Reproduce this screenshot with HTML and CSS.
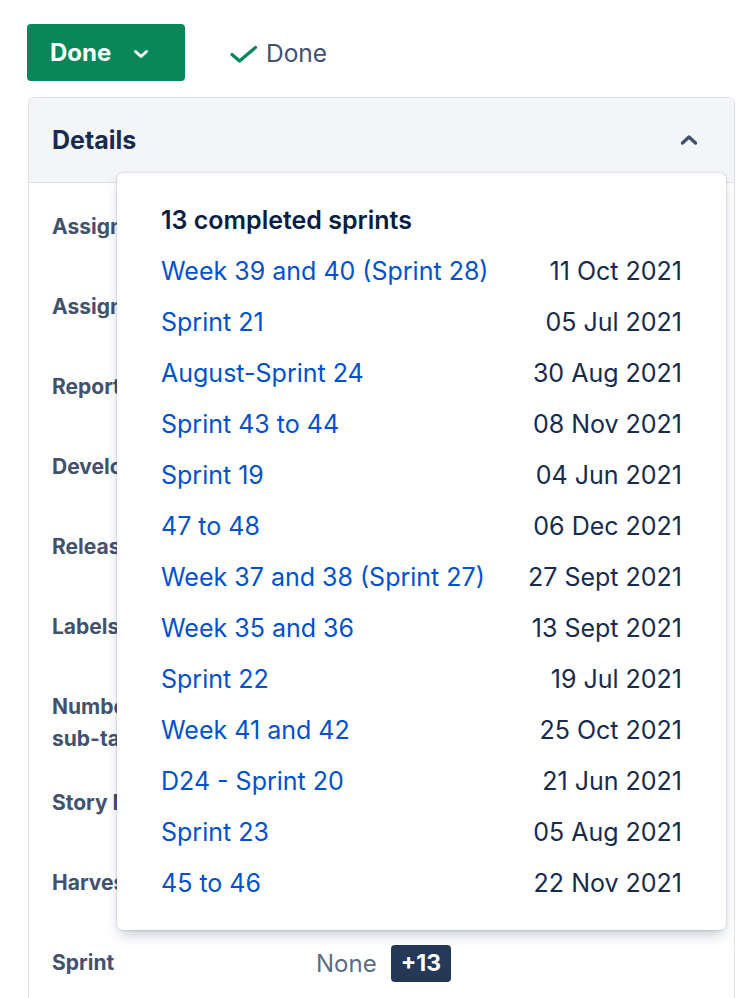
FILE: index.html
```html
<!DOCTYPE html>
<html lang="en">
<head>
<meta charset="utf-8">
<title>Issue details</title>
<link rel="stylesheet" href="styles.css">
</head>
<body>
<div class="toolbar">
  <button class="status-btn">
    <span>Done</span>
    <svg class="btn-chev" width="16" height="12" viewBox="0 0 16 12"><path d="M2.5 3.5 L8 8.5 L13.5 3.5" fill="none" stroke="#fff" stroke-width="3" stroke-linecap="round" stroke-linejoin="round"/></svg>
  </button>
  <div class="resolution">
    <svg class="check" width="28" height="20" viewBox="0 0 28 20"><path d="M2 10.5 L9.5 17 L25.5 3.5" fill="none" stroke="#00875a" stroke-width="3.2" stroke-linecap="round" stroke-linejoin="round"/></svg>
    <span>Done</span>
  </div>
</div>

<section class="panel">
  <header class="panel-head">
    <h2>Details</h2>
    <svg class="up-chev" width="18" height="12" viewBox="0 0 18 12"><path d="M2.5 9 L9 3 L15.5 9" fill="none" stroke="#42526e" stroke-width="3.4" stroke-linecap="round" stroke-linejoin="round"/></svg>
  </header>
  <div class="panel-body">
    <div class="row"><div class="label">Assignee</div><div class="value"></div></div>
    <div class="row"><div class="label">Assigned</div><div class="value"></div></div>
    <div class="row"><div class="label">Reporter</div><div class="value"></div></div>
    <div class="row"><div class="label">Develop</div><div class="value"></div></div>
    <div class="row"><div class="label">Releases</div><div class="value"></div></div>
    <div class="row"><div class="label">Labels</div><div class="value"></div></div>
    <div class="row"><div class="label">Number of<br>sub-tasks</div><div class="value"></div></div>
    <div class="row"><div class="label">Story Points</div><div class="value"></div></div>
    <div class="row"><div class="label">Harvest</div><div class="value"></div></div>
    <div class="row last"><div class="label">Sprint</div><div class="value"><span class="none">None</span><span class="badge">+13</span></div></div>
  </div>
</section>

<div class="popup">
  <div class="popup-title">13 completed sprints</div>
  <ul class="sprints">
    <li><a>Week 39 and 40 (Sprint 28)</a><span>11 Oct 2021</span></li>
    <li><a>Sprint 21</a><span>05 Jul 2021</span></li>
    <li><a>August-Sprint 24</a><span>30 Aug 2021</span></li>
    <li><a>Sprint 43 to 44</a><span>08 Nov 2021</span></li>
    <li><a>Sprint 19</a><span>04 Jun 2021</span></li>
    <li><a>47 to 48</a><span>06 Dec 2021</span></li>
    <li><a>Week 37 and 38 (Sprint 27)</a><span>27 Sept 2021</span></li>
    <li><a>Week 35 and 36</a><span>13 Sept 2021</span></li>
    <li><a>Sprint 22</a><span>19 Jul 2021</span></li>
    <li><a>Week 41 and 42</a><span>25 Oct 2021</span></li>
    <li><a>D24 - Sprint 20</a><span>21 Jun 2021</span></li>
    <li><a>Sprint 23</a><span>05 Aug 2021</span></li>
    <li><a>45 to 46</a><span>22 Nov 2021</span></li>
  </ul>
</div>
</body>
</html>
```

FILE: styles.css
```css
* { box-sizing: border-box; }
html, body { margin: 0; padding: 0; }
body {
  background: #ffffff;
  font-family: Inter, "Noto Sans", "Liberation Sans", sans-serif;
  color: #172b4d;
  height: 998px;
  overflow: hidden;
}

.toolbar {
  display: flex;
  align-items: center;
  padding: 24px 0 0 27px;
  gap: 45px;
}
.status-btn {
  display: flex;
  align-items: center;
  gap: 22px;
  height: 57px;
  width: 158px;
  padding: 0 0 0 23px;
  border: none;
  border-radius: 4px;
  background: #07875a;
  color: #ffffff;
  font-family: inherit;
  font-size: 24px;
  font-weight: 700;
}
.btn-chev { margin-top: 2px; }
.resolution {
  display: flex;
  align-items: center;
  gap: 8px;
  font-size: 24.5px;
  color: #42526e;
}
.check { margin-top: 2px; }

.panel {
  margin: 16px 0 0 28px;
  width: 707px;
  border: 1px solid #dfe1e6;
  border-bottom: none;
  border-radius: 6px 6px 0 0;
  height: 901px;
}
.panel-head {
  height: 85px;
  display: flex;
  align-items: center;
  justify-content: space-between;
  padding: 0 36px 0 23px;
  background: #f4f5f7;
  border-bottom: 1px solid #dfe1e6;
  border-radius: 6px 6px 0 0;
}
.panel-head h2 {
  margin: 0;
  font-size: 25px;
  font-weight: 700;
  color: #172b4d;
}

.row {
  display: grid;
  grid-template-columns: 264px 1fr;
  padding: 28px 0 4px 23px;
  min-height: 80px;
}
.row.last {
  min-height: 0;
  padding-bottom: 0;
}
.label {
  font-size: 21px;
  line-height: 32px;
  font-weight: 700;
  color: #42526e;
  white-space: nowrap;
}
.value {
  display: flex;
  align-items: center;
  height: 32px;
  gap: 14px;
}
.none {
  font-size: 24px;
  color: #5e6c84;
}
.badge {
  display: inline-flex;
  align-items: center;
  height: 37px;
  padding: 0 10px;
  border-radius: 4px;
  background: #253858;
  color: #ffffff;
  font-size: 23px;
  font-weight: 700;
}

.popup {
  position: absolute;
  left: 117px;
  top: 173px;
  width: 609px;
  height: 757px;
  padding: 21px 44px 0 44px;
  background: #ffffff;
  border-radius: 6px;
  box-shadow: 0 7px 14px -3px rgba(9, 30, 66, 0.25), 0 0 2px rgba(9, 30, 66, 0.31);
}
.popup-title {
  height: 51px;
  line-height: 53px;
  font-size: 25px;
  font-weight: 600;
  color: #091e42;
}
.sprints {
  list-style: none;
  margin: 0;
  padding: 0;
}
.sprints li {
  display: flex;
  justify-content: space-between;
  height: 51px;
  line-height: 53px;
  font-size: 25px;
}
.sprints a {
  color: #0052cc;
}
.sprints span {
  color: #172b4d;
}
```
